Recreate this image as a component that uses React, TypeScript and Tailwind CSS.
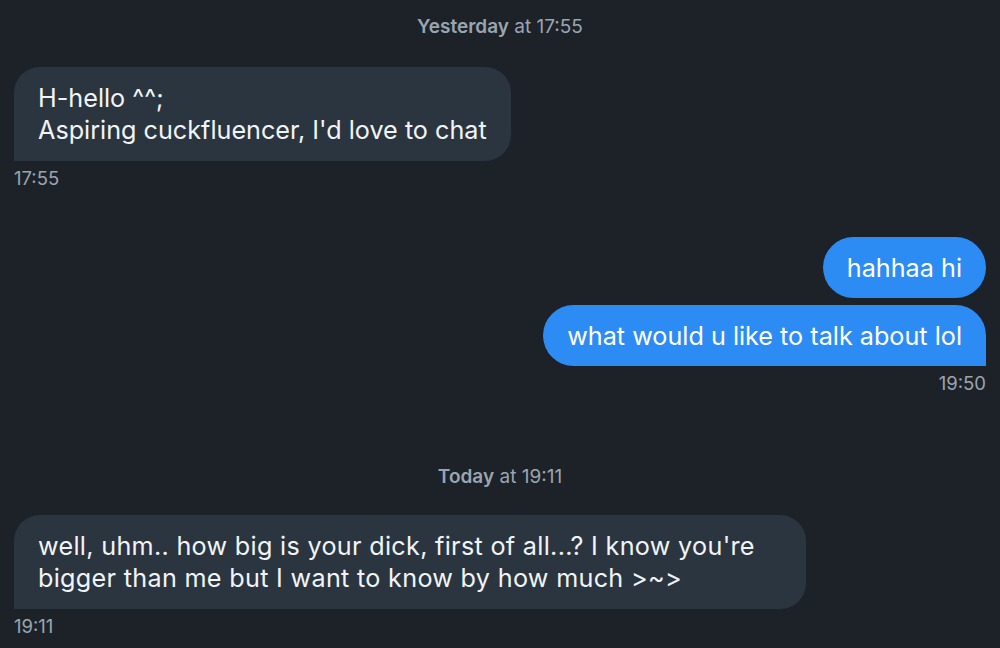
export default function App() {
  const font = { fontFamily: "Inter, 'Noto Sans', sans-serif" };
  return (
    <div style={font} className="w-[1000px] h-[648px] bg-[#1d2229] overflow-hidden flex flex-col px-[14px]">
      <div className="pt-[15px] text-center text-[19px] leading-[24px] text-[#9ba5b1]">
        <span className="font-semibold">Yesterday</span> at 17:55
      </div>
      <div className="mt-[28px] flex flex-col items-start">
        <div className="bg-[#2b3540] text-[#f1f4f7] text-[25.2px] leading-[32px] px-[24px] py-[15px] rounded-[26px] rounded-bl-none">
          H-hello ^^;<br />Aspiring cuckfluencer, I'd love to chat
        </div>
        <div className="mt-[5px] text-[18.5px] leading-[24px] text-[#9ba5b1]">17:55</div>
      </div>
      <div className="mt-[47px] flex flex-col items-end gap-[7px]">
        <div className="bg-[#2d8cf4] text-white text-[25.2px] leading-[32px] px-[24px] py-[14.5px] rounded-[31px]">
          hahhaa hi
        </div>
        <div className="bg-[#2d8cf4] text-white text-[25.2px] leading-[32px] px-[24px] py-[14.5px] rounded-[31px] rounded-br-none">
          what would u like to talk about lol
        </div>
      </div>
      <div className="mt-[5px] text-right text-[18.5px] leading-[24px] text-[#9ba5b1]">19:50</div>
      <div className="mt-[70px] text-center text-[19px] leading-[24px] text-[#9ba5b1]">
        <span className="font-semibold">Today</span> at 19:11
      </div>
      <div className="mt-[26px] flex flex-col items-start">
        <div className="w-[792px] bg-[#2b3540] text-[#f1f4f7] text-[25.2px] tracking-[0.3px] leading-[32px] px-[24px] py-[15px] rounded-[26px] rounded-bl-none">
          well, uhm.. how big is your dick, first of all...? I know you're<br />bigger than me but I want to know by how much &gt;~&gt;
        </div>
        <div className="mt-[5px] text-[18.5px] leading-[24px] text-[#9ba5b1]">19:11</div>
      </div>
    </div>
  );
}
